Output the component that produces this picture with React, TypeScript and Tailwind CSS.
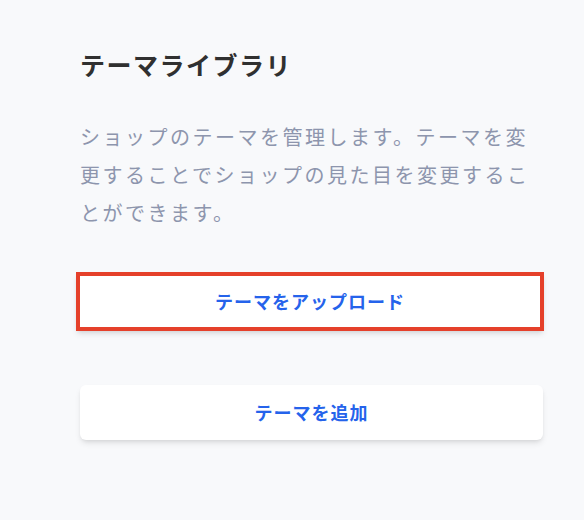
export default function App() {
  return (
    <div
      className="min-h-[520px] w-[584px] bg-[#f8f9fb] pl-[80px] pt-[48px]"
      style={{ fontFamily: '"Noto Sans CJK JP", "Noto Sans", sans-serif' }}
    >
      <div className="flex w-[463px] flex-col">
        <h2 className="text-[25px] font-bold leading-[32px] tracking-[1.5px] text-[#303030]">
          テーマライブラリ
        </h2>
        <p className="mt-[38px] text-[20px] leading-[38px] tracking-[2.5px] text-[#8d95ad]">
          ショップのテーマを管理します。テーマを変更することでショップの見た目を変更することができます。
        </p>

        {/* ハイライト中のボタン */}
        <button className="-ml-1 mt-[40px] flex h-[59px] w-[468px] items-center justify-center border-4 border-[#e5402a] bg-white text-[18px] font-bold tracking-[1px] text-[#2563eb] shadow-md">
          テーマをアップロード
        </button>

        <button className="mt-[54px] flex h-[55px] w-[463px] items-center justify-center rounded-md bg-white text-[18px] font-bold tracking-[1px] text-[#2563eb] shadow-md">
          テーマを追加
        </button>
      </div>
    </div>
  );
}
